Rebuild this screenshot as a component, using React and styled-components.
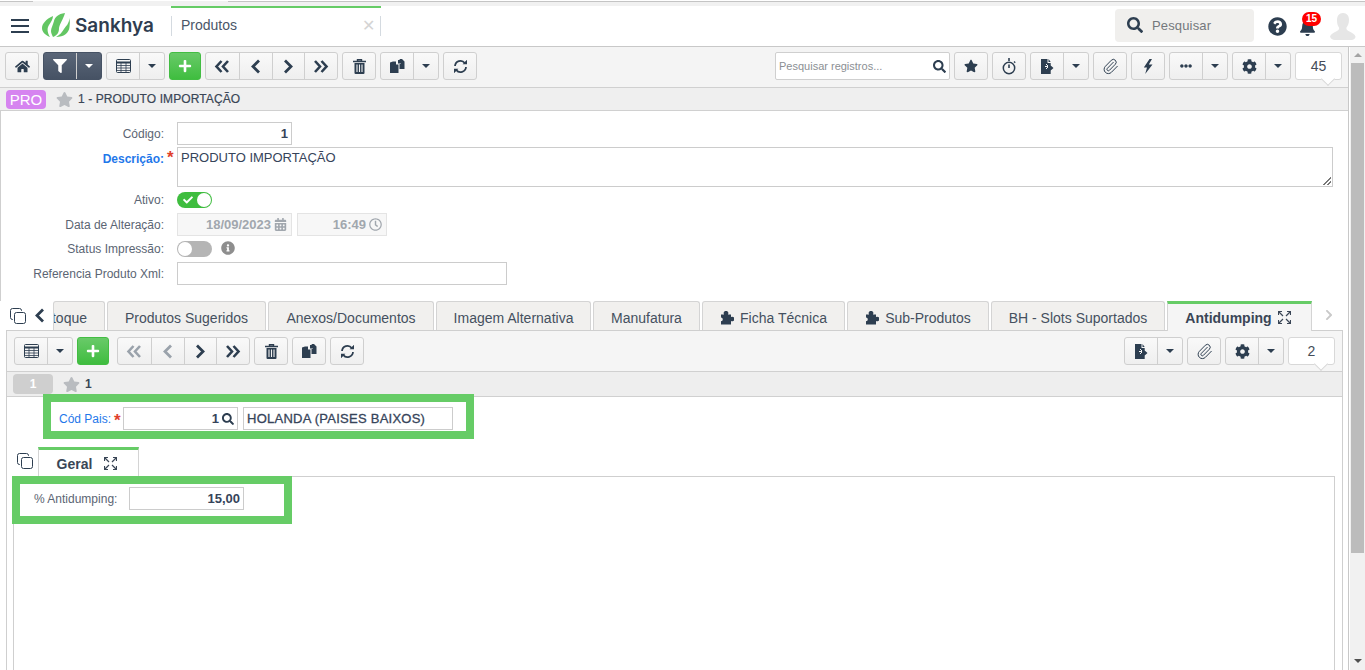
import React from "react";
import styled, { createGlobalStyle } from "styled-components";
import {
  FaHome, FaFilter, FaPlus, FaChevronRight,
  FaStar, FaEllipsisH, FaCog, FaSearch, FaQuestionCircle, FaBell, FaCheck,
  FaInfoCircle, FaCalendarAlt, FaRegClock,
} from "react-icons/fa";
import { Paperclip } from "lucide-react";

const Global = createGlobalStyle`
  html, body { margin: 0; padding: 0; background: #fff; overflow: hidden; }
  body { font-family: "Liberation Sans", Arial, sans-serif; color: #2f3e52; }
  * { box-sizing: border-box; }
`;

const NAVY = "#2d3e50";
const GREEN = "#66cc66";

const Page = styled.div`
  position: relative; width: 1365px; height: 670px; overflow: hidden;
  display: flex; flex-direction: column;
`;
const TopStrip = styled.div`
  height: 6px; flex: none; background: #f1f1f1; border-top: 1px solid #fff; display: flex;
`;
const StripSeg = styled.div`
  width: ${p => p.$w}px; height: 1px; background: ${p => p.$c};
`;
const Header = styled.header`
  height: 41px; flex: none; display: flex; align-items: stretch; background: #fff;
  border-bottom: 1px solid #c8c8c8;
`;
const Burger = styled.button`
  width: 42px; border: 0; background: none; padding: 0 0 0 11px; display: flex; flex-direction: column;
  justify-content: center; gap: 4px;
  span { display: block; width: 18px; height: 2px; background: ${NAVY}; }
`;
const Logo = styled.div`
  width: 129px; display: flex; align-items: center; gap: 5px; padding-bottom: 2px;
  svg { flex: none; }
`;
const LogoText = styled.span`
  font-family: "Inter", sans-serif; font-weight: 600; font-size: 19px; color: #2f3d50;
`;
const OpenTab = styled.div`
  width: 210px; border-top: 2px solid ${GREEN}; display: flex; align-items: center; position: relative;
  padding: 0 10px 4px; justify-content: space-between; font-size: 14px; color: #4a5668;
  &::before, &::after { content: ""; position: absolute; top: 8px; height: 20px; width: 1px; background: #d4dae0; }
  &::before { left: 0; } &::after { right: 0; }
`;
const CloseX = styled.span` color: #d4d4d4; font-size: 16px; margin-right: -4px; `;
const HeadRight = styled.div`
  margin-left: auto; display: flex; align-items: center; padding-right: 9px;
`;
const GlobalSearch = styled.div`
  width: 139px; height: 33px; border-radius: 4px; background: #f0efed; display: flex; align-items: center;
  padding-left: 12px; gap: 9px; font-size: 13px; color: #74787c; letter-spacing: .15px;
  margin-bottom: 2px; margin-right: 14px;
`;
const BellWrap = styled.div`
  position: relative; margin-left: 12px; margin-right: 14px; display: flex; top: 1px;
`;
const Badge = styled.span`
  position: absolute; top: -7px; left: 3px; width: 19px; height: 14px; border-radius: 8px; background: #f00;
  color: #fff; font-size: 10px; font-weight: 700; text-align: center; line-height: 14px;
`;
const Body = styled.div` flex: 1; display: flex; min-height: 0; `;
const Content = styled.main`
  width: 1349px; flex: none; display: flex; flex-direction: column; border-right: 1px solid #c8c8c8; min-height: 0;
`;
const Scrollbar = styled.div`
  margin-left: 1px; width: 15px; background: #f1f1f1; display: flex; flex-direction: column; align-items: center;
  padding-top: 6px;
`;
const ScrollThumb = styled.div` width: 13px; height: 490px; margin-top: 6px; flex: none; background: #bcbcbc; `;
const ArrowUp = styled.span` width: 0; height: 0; border: 4px solid transparent; border-top: 0; border-bottom: 4px solid #a3a3a3; `;
const ArrowDown = styled.span` width: 0; height: 0; border: 4px solid transparent; border-bottom: 0; border-top: 4px solid #505050; margin-top: 106px; `;

const Toolbar = styled.div`
  height: 40px; flex: none; display: flex; align-items: flex-start;
  padding: ${p => p.$pt}px ${p => p.$pr}px 0 ${p => p.$pl}px;
  gap: 4px; background: ${p => p.$bg};
`;
const Spacer = styled.div` flex: 1; `;
const Group = styled.div`
  display: flex; height: 28px; border: 1px solid #cfcfcf; border-radius: 3px; overflow: hidden; flex: none;
  background: linear-gradient(#f9f9f9, #efefef);
  margin-left: ${p => p.$ml || 0}px;
`;
const Btn = styled.button`
  width: ${p => p.$w || 32}px; border: 0; padding: 0; background: none; display: flex; align-items: center; justify-content: center;
  color: ${p => (p.$off ? "#9aa2ab" : NAVY)}; font-size: 14px;
  & + & { border-left: 1px solid #cfcfcf; }
`;
const Caret = styled.span`
  width: 0; height: 0; border: 4px solid transparent; border-bottom: 0; border-top: 4px solid ${p => p.$light ? "#fff" : NAVY};
`;
const DarkGroup = styled(Group)`
  background: linear-gradient(#5a6678, #465264); border-color: #465264;
  button { color: #fff; } button + button { border-left: 1px solid #6a7585; }
`;
const AddBtn = styled.button`
  width: 32px; height: 28px; border: 1px solid #43bd43; border-radius: 3px; padding: 0; color: #fff; font-size: 14px;
  background: linear-gradient(#69ca69, #3fbd3f); display: flex; align-items: center; justify-content: center; flex: none;
`;
const SearchRec = styled.div`
  width: 175px; height: 28px; background: #fff; border: 1px solid #cfcfcf; border-radius: 2px; display: flex; align-items: center;
  justify-content: space-between; padding: 0 3px 0 3px; font-size: 11px; color: #8b8f94;
`;
const Count = styled.div`
  position: relative; width: ${p => p.$w}px; height: 28px; background: #fff; border: 1px solid #d8d8d8; border-radius: 3px; font-size: 14px;
  color: #444c58; display: flex; align-items: center; justify-content: center; flex: none;
  &::after {
    content: ""; position: absolute; right: 8px; bottom: -5px; width: 9px; height: 9px; background: #fff;
    border-right: 1px solid #d8d8d8; border-bottom: 1px solid #d8d8d8; transform: rotate(45deg);
  }
`;
const TitleBar = styled.div`
  height: 24px; flex: none; display: flex; align-items: center; background: #efefef; border-top: 1px solid #d0d0d0;
  border-bottom: 1px solid #d0d0d0; padding-left: 6px; font-size: 12px; font-weight: 400; color: #3a4656;
  -webkit-text-stroke: .2px #3a4656; letter-spacing: .1px;
`;
const Pro = styled.span`
  width: 40px; height: 19px; border-radius: 4px; background: #d684f0; color: #fff; font-size: 15px; text-align: center; line-height: 19px;
  margin-right: 10px; -webkit-text-stroke: 0; letter-spacing: 0;
`;
const TitleStar = styled(FaStar)` margin-right: 5px; color: #b9bcc0; flex: none; `;
const Form = styled.section`
  flex: none; height: 190px; padding-top: 11px; border-left: 1px solid #cfcfcf; display: grid;
  grid-template-columns: 163px 1fr; column-gap: 4px; align-content: start;
`;
const Label = styled.label`
  height: ${p => p.$h}px; font-size: 12px; color: ${p => (p.$req ? "#1f78ea" : "#5b6573")};
  text-align: right; padding-top: ${p => p.$pt ?? 5}px; white-space: nowrap; font-weight: ${p => (p.$req ? 700 : 400)};
  position: relative;
`;
const Star = styled.i`
  position: absolute; left: 100%; margin-left: 3px; top: ${p => p.$t ?? 0}px; font-style: normal; font-weight: 700; color: #e0402c; font-size: 17px;
`;
const Cell = styled.div`
  height: ${p => p.$h}px; padding-left: 9px; display: flex; align-items: flex-start; gap: 5px;
`;
const Field = styled.div`
  width: ${p => p.$w}px; height: ${p => p.$h || 23}px; flex: none; border: 1px solid ${p => p.$off ? "#e4e4e4" : "#cccccc"}; background: ${p => p.$off ? "#f7f7f7" : "#fff"};
  display: flex; align-items: ${p => p.$multi ? "flex-start" : "center"}; justify-content: ${p => p.$left ? "flex-start" : "flex-end"};
  padding: ${p => p.$multi ? "2px 3px" : `0 ${p.$off ? 4 : 3}px`}; font-size: ${p => p.$fs || 12}px; gap: 3px; position: relative;
  color: ${p => p.$off ? "#a1a7ae" : "#36445a"}; font-weight: ${p => p.$bold ? 700 : 400};
`;
const NameField = styled(Field)`
  -webkit-text-stroke: .3px #36445a; letter-spacing: .25px;
`;
const Grip = styled.span`
  position: absolute; right: 1px; bottom: 1px; width: 8px; height: 8px;
  background: linear-gradient(135deg, transparent 50%, #777 50%, #777 58%, transparent 58%, transparent 75%, #777 75%, #777 83%, transparent 83%);
`;
const Toggle = styled.div`
  width: 35px; height: 16px; margin-top: 1px; border-radius: 8px; background: ${p => (p.$on ? "#3fbd3f" : "#b5b5b5")};
  position: relative; color: #fff; font-size: 10px; padding: 3px 0 0 6px; flex: none;
  &::after {
    content: ""; position: absolute; top: 1px; ${p => (p.$on ? "right: 1px" : "left: 1px")}; width: 14px; height: 14px; border-radius: 50%; background: #fff;
  }
`;
const InfoIcon = styled.span` margin: 1px 0 0 4px; color: #8e8e8e; font-size: 14px; display: flex; `;
const TabRow = styled.div`
  height: 30px; flex: none; display: flex; align-items: flex-start; position: relative; z-index: 1; gap: 2px;
  overflow: hidden; border-left: 1px solid transparent;
`;
const TabLead = styled.div`
  width: 52px; height: 29px; flex: none; display: flex; align-items: center; padding-left: 9px; gap: 8px; background: #fff; color: ${NAVY}; z-index: 1; margin-right: -2px;
`;
const Tab = styled.div`
  flex: none; width: ${p => p.$w}px; height: 29px; border: 1px solid #d4d4d4; border-bottom: 0; border-radius: 3px 3px 0 0; background: #f1f0ee;
  display: flex; align-items: center; justify-content: ${p => p.$clip ? "flex-end" : "center"}; gap: 6px; font-size: 14px; color: #45505f; padding-right: ${p => p.$clip ? "17px" : 0}; padding-top: 3px;
  white-space: nowrap; overflow: hidden;
`;
const ActiveTab = styled.div`
  flex: none; width: ${p => p.$w}px; height: 31px; border: 1px solid #d4d4d4; border-top: 3px solid ${GREEN}; border-bottom: 0;
  background: ${p => p.$bg}; position: relative; z-index: 2; display: flex; align-items: center; justify-content: center;
  gap: ${p => p.$gap}px; font-size: 14px; font-weight: 700; color: #3a4656; padding: 0 3px 1px 0;
`;
const TabNext = styled.div` width: 36px; height: 30px; display: flex; align-items: center; justify-content: center; color: #c9c9c9; padding: 0 4px 3px 0; `;
const Inner = styled.section`
  flex: 1; min-height: 0; margin: -1px 5px 0 6px; border: 1px solid #cfcfcf; border-bottom: 0; display: flex; flex-direction: column; background: #fff;
`;
const SubBar = styled.div`
  height: 26px; flex: none; background: #eee; border-top: 1px solid #d0d0d0; border-bottom: 1px solid #d0d0d0; display: flex; align-items: center;
  padding-left: 6px; font-size: 12px; font-weight: 700; color: #3a4656;
`;
const SubBadge = styled.span`
  width: 40px; height: 20px; background: #cfcfcf; color: #fff; border-radius: 4px; font-size: 12px; text-align: center; line-height: 20px; margin-right: 10px;
`;
const KeyRow = styled.div`
  height: 50px; flex: none; display: flex; align-items: flex-start; padding: 10px 0 0 52px; gap: 5px; font-size: 12px;
`;
const KeyLabel = styled.label` color: #1f78ea; margin: 5px 7px 0 0; position: relative; font-size: 12px; `;
const SubTabs = styled.div`
  height: 30px; flex: none; display: flex; padding-left: 10px; gap: 5px; align-items: flex-start;
`;
const CopyWrap = styled.div` width: 16px; padding-top: 6px; color: ${NAVY}; `;
const Panel = styled.div`
  flex: 1; margin: -1px 0 0 6px; width: 1322px; border: 1px solid #cfcfcf; border-bottom: 0; padding: 10px 0 0 20px; display: flex; align-items: flex-start; gap: 12px; font-size: 12px; color: #5b6573;
`;
const PanelLabel = styled.label` padding-top: 5px; width: 83px; white-space: nowrap; `;
const Callout = styled.div`
  position: absolute; border: 8px solid ${GREEN}; left: ${p => p.$x}px; top: ${p => p.$y}px; width: ${p => p.$w}px; height: ${p => p.$h}px; pointer-events: none; z-index: 5;
`;

const Svg = ({ w = 16, h = 16, vb = "0 0 16 16", children, ...r }) => (
  <svg width={w} height={h} viewBox={vb} fill="none" {...r}>{children}</svg>
);
const TableIcon = () => (
  <Svg w={15} h={14} vb="0 0 15 14">
    <rect x=".5" y=".5" width="14" height="13" rx="1" stroke={NAVY} />
    <path d="M0 3.5h15" stroke={NAVY} strokeWidth="2" />
    <path d="M1 6.5h13M1 9h13M1 11.5h13M5 4v9M10 4v9" stroke={NAVY} strokeWidth=".8" />
  </Svg>
);
const TrashIcon = () => (
  <Svg w={13} h={15} vb="0 0 13 15">
    <path d="M4.5 2V.8h4V2M0 2.5h13" stroke={NAVY} strokeWidth="1.4" />
    <path d="M1.5 4h10v10a1 1 0 0 1-1 1h-8a1 1 0 0 1-1-1z" fill={NAVY} />
    <path d="M4 5.5V13M6.5 5.5V13M9 5.5V13" stroke="#f5f5f5" strokeWidth="1.1" />
  </Svg>
);
const CopyIcon = () => (
  <Svg w={15} h={14} vb="0 0 15 14">
    <path d="M8 1h3v3.5H8z" fill={NAVY} />
    <path d="M9.5 0H12l2.5 2.5V10H9.5V5H11z" fill={NAVY} />
    <path d="M0 3.5 3 2.5h3v3h2.5V14H0z" fill={NAVY} />
  </Svg>
);
const RefreshIcon = () => (
  <Svg w={15} h={15} vb="0 0 15 15">
    <path d="M2 7a5.5 5.5 0 0 1 9.8-3M13 8a5.5 5.5 0 0 1-9.8 3" stroke={NAVY} strokeWidth="1.8" />
    <path d="M14 .8v4.4H9.6zM1 14.2V9.8h4.4z" fill={NAVY} />
  </Svg>
);
const TimerIcon = () => (
  <Svg w={14} h={17} vb="0 0 14 17">
    <circle cx="7" cy="10" r="5.7" stroke={NAVY} strokeWidth="1.5" />
    <path d="M7 0v3M7 6.5V10" stroke={NAVY} strokeWidth="1.6" />
    <path d="M12 3.5l1.2 1.2" stroke={NAVY} strokeWidth="1.3" />
  </Svg>
);
const ExportIcon = () => (
  <Svg w={13} h={15} vb="0 0 13 15">
    <path d="M0 0h6.5v4h3.2v2.5L12.500 9 9.700 11.500V15H0z" fill={NAVY} />
    <path d="M7.500 0l2.200 3H7.500z" fill={NAVY} />
    <path d="M5 5l2 2M5 10l2-2M4 7.500h3" stroke="#f5f5f5" strokeWidth="1" />
  </Svg>
);
const ExpandIcon = () => (
  <Svg w={13} h={13} vb="0 0 13 13">
    <path d="M.5 4V.5H4M9 .5h3.500V4M12.500 9v3.500H9M4 12.500H.5V9" stroke="#3a4656" strokeWidth="1.200" />
    <path d="M1 1l4 4M12 1L8 5M12 12L8 8M1 12l4-4" stroke="#3a4656" strokeWidth="1.200" />
  </Svg>
);
const CopiesIcon = () => (
  <Svg w={16} h={16} vb="0 0 16 16">
    <rect x="4.500" y="4.500" width="11" height="11" rx="2" stroke={NAVY} />
    <path d="M3 11.500H2.500a2 2 0 0 1-2-2v-7a2 2 0 0 1 2-2h7a2 2 0 0 1 2 2V3" stroke={NAVY} />
  </Svg>
);
const ChevL = ({ c = NAVY }) => (
  <Svg w={11} h={15} vb="0 0 11 15"><path d="M9 1.500 3 7.500l6 6" stroke={c} strokeWidth="2.800" /></Svg>
);
const ChevR = ({ c = NAVY }) => (
  <Svg w={11} h={15} vb="0 0 11 15"><path d="M2 1.500l6 6-6 6" stroke={c} strokeWidth="2.800" /></Svg>
);
const ChevLL = ({ c = NAVY }) => (
  <Svg w={16} h={13} vb="0 0 16 13"><path d="M7.500 1 2.500 6.500l5 5.500M14 1 9 6.500l5 5.500" stroke={c} strokeWidth="2.600" /></Svg>
);
const ChevRR = ({ c = NAVY }) => (
  <Svg w={16} h={13} vb="0 0 16 13"><path d="M2 1l5 5.500L2 12M8.500 1l5 5.500-5 5.500" stroke={c} strokeWidth="2.600" /></Svg>
);
const Bolt = () => (
  <Svg w={10} h={15} vb="0 0 10 15"><path d="M6.500 0 .8 8.500h3.200L2.200 15 9.500 5.500H5.800L9 0z" fill={NAVY} /></Svg>
);
const Puzzle = () => (
  <Svg w={14} h={14} vb="0 0 14 14">
    <path d="M1 3.500H4.200a2.300 2.300 0 1 1 3.600 0H11V6a2.300 2.300 0 1 1 0 4v3.500H1V10.200a1.800 1.800 0 0 0 0-3.600z" fill={NAVY} />
  </Svg>
);
const Avatar = () => (
  <Svg w={26} h={27} vb="0 0 26 27">
    <path d="M13 0c4 0 6 3.200 6 7 0 3-1 5.500-2.500 7.500-.4 1.500.2 2.700 2 3.500 3.500 1.500 6 3 7 5.500 0 2-2 3.500-4 3.500H5c-2.500 0-4.500-1.500-5-3.500 1-2.500 3.500-4 7-5.500 1.800-.8 2.400-2 2-3.500C7.500 12.500 7 10 7 7c0-3.800 2-7 6-7z" fill="#e6e6e6" />
  </Svg>
);
const LogoMark = () => (
  <Svg w={28} h={24} vb="0 0 28 24">
    <path d="M11 3C4 6 0 11 0 15c0 4 3 7 8 9-3-5-3-9-1-12 2-3 4-6 4-9z" fill="#63c663" />
    <path d="M23 0c-7 1-10 4-11 8-1 4-3 7-3 10 0 2 1 4 2 6 5-2 6-5 6-9 1-5 4-8 6-15z" fill="#63c663" />
    <path d="M27.500 5c-.5 6-3.500 8-5.500 11-2 3-4 6-8 8 8 0 13-4 13.500-10 .5-3 .5-6 0-9z" fill="#63c663" />
  </Svg>
);

const Dropdown = ({ icon, w = 32, cw = 25 }) => (
  <Group><Btn $w={w}>{icon}</Btn><Btn $w={cw}><Caret /></Btn></Group>
);
const Single = ({ icon, w = 32 }) => <Group><Btn $w={w}>{icon}</Btn></Group>;
const Clip = () => <Paperclip size={17} strokeWidth={1.4} color={NAVY} />;

const tabs = [
  ["Produtos Sugeridos", 159], ["Anexos/Documentos", 166], ["Imagem Alternativa", 155], ["Manufatura", 107],
];

export default function App() {
  return (
    <Page>
      <Global />
      <TopStrip>
        <StripSeg $w={33} $c="#c4c4c4" /><StripSeg $w={195} $c="transparent" /><StripSeg $w={1137} $c="#c4c4c4" />
      </TopStrip>
      <Header>
        <Burger aria-label="menu"><span /><span /><span /></Burger>
        <Logo><LogoMark /><LogoText>Sankhya</LogoText></Logo>
        <OpenTab>Produtos<CloseX>✕</CloseX></OpenTab>
        <HeadRight>
          <GlobalSearch><FaSearch size={16} color={NAVY} />Pesquisar</GlobalSearch>
          <FaQuestionCircle size={19} color={NAVY} />
          <BellWrap><FaBell size={17} color={NAVY} /><Badge>15</Badge></BellWrap>
          <Avatar />
        </HeadRight>
      </Header>
      <Body>
        <Content>
          <Toolbar $pt={5} $pl={5} $pr={6} $bg="#f4f4f4">
            <Single icon={<FaHome size={15} />} />
            <DarkGroup><Btn><FaFilter size={14} /></Btn><Btn $w={25}><Caret $light /></Btn></DarkGroup>
            <Dropdown icon={<TableIcon />} />
            <AddBtn><FaPlus size={14} /></AddBtn>
            <Group>
              <Btn $w={32.75}><ChevLL /></Btn><Btn $w={32.75}><ChevL /></Btn>
              <Btn $w={32.75}><ChevR /></Btn><Btn $w={32.75}><ChevRR /></Btn>
            </Group>
            <Single icon={<TrashIcon />} />
            <Dropdown icon={<CopyIcon />} />
            <Single icon={<RefreshIcon />} />
            <Spacer />
            <SearchRec>Pesquisar registros...<FaSearch size={13} color={NAVY} /></SearchRec>
            <Single icon={<FaStar size={14} />} />
            <Single icon={<TimerIcon />} />
            <Dropdown icon={<ExportIcon />} />
            <Single icon={<Clip />} />
            <Single icon={<Bolt />} />
            <Dropdown icon={<FaEllipsisH size={12} />} />
            <Dropdown icon={<FaCog size={15} />} />
            <Count $w={47}>45</Count>
          </Toolbar>
          <TitleBar>
            <Pro>PRO</Pro><TitleStar size={17} />1 - PRODUTO IMPORTAÇÃO
          </TitleBar>
          <Form>
            <Label $h={25}>Código:</Label>
            <Cell $h={25}><Field $w={115} $fs={13} $bold>1</Field></Cell>
            <Label $h={44} $req $pt={5}>Descrição:<Star $t={1}>*</Star></Label>
            <Cell $h={44}><Field $w={1156} $h={40} $multi $left $fs={13}>PRODUTO IMPORTAÇÃO<Grip /></Field></Cell>
            <Label $h={22} $pt={2}>Ativo:</Label>
            <Cell $h={22}><Toggle $on><FaCheck /></Toggle></Cell>
            <Label $h={27} $pt={5}>Data de Alteração:</Label>
            <Cell $h={27}>
              <Field $w={115} $off $bold $fs={13}>18/09/2023<FaCalendarAlt size={13} /></Field>
              <Field $w={90} $off $bold $fs={13}>16:49<FaRegClock size={13} /></Field>
            </Cell>
            <Label $h={22} $pt={2}>Status Impressão:</Label>
            <Cell $h={22}><Toggle /><InfoIcon><FaInfoCircle /></InfoIcon></Cell>
            <Label $h={25}>Referencia Produto Xml:</Label>
            <Cell $h={25}><Field $w={330} /></Cell>
          </Form>
          <TabRow>
            <TabLead><CopiesIcon /><ChevL /></TabLead>
            <Tab $w={52} $clip>toque</Tab>
            {tabs.map(([t, w]) => <Tab key={t} $w={w}>{t}</Tab>)}
            <Tab $w={143}><Puzzle />Ficha Técnica</Tab>
            <Tab $w={142}><Puzzle />Sub-Produtos</Tab>
            <Tab $w={174}>BH - Slots Suportados</Tab>
            <ActiveTab $w={145} $gap={6} $bg="#f5f5f5">Antidumping<ExpandIcon /></ActiveTab>
            <TabNext><FaChevronRight size={12} /></TabNext>
          </TabRow>
          <Inner>
            <Toolbar $pt={6} $pl={7} $pr={7} $bg="#f5f5f5">
              <Dropdown icon={<TableIcon />} />
              <AddBtn><FaPlus size={14} /></AddBtn>
              <Group $ml={4}>
                <Btn $w={32.75} $off><ChevLL c="#9aa2ab" /></Btn><Btn $w={32.75} $off><ChevL c="#9aa2ab" /></Btn>
                <Btn $w={32.75}><ChevR /></Btn><Btn $w={32.75}><ChevRR /></Btn>
              </Group>
              <Single icon={<TrashIcon />} />
              <Single icon={<CopyIcon />} />
              <Single icon={<RefreshIcon />} />
              <Spacer />
              <Dropdown icon={<ExportIcon />} />
              <Single icon={<Clip />} />
              <Dropdown icon={<FaCog size={15} />} />
              <Count $w={47}>2</Count>
            </Toolbar>
            <SubBar><SubBadge>1</SubBadge><TitleStar size={17} />1</SubBar>
            <KeyRow>
              <KeyLabel>Cód Pais:<Star $t={-1}>*</Star></KeyLabel>
              <Field $w={115} $fs={13} $bold>1<FaSearch size={12} color={NAVY} /></Field>
              <NameField $w={210} $left $fs={13}>HOLANDA (PAISES BAIXOS)</NameField>
            </KeyRow>
            <SubTabs>
              <CopyWrap><CopiesIcon /></CopyWrap>
              <ActiveTab $w={101} $gap={12} $bg="#fff">Geral<ExpandIcon /></ActiveTab>
            </SubTabs>
            <Panel>
              <PanelLabel>% Antidumping:</PanelLabel>
              <Field $w={115} $fs={13} $bold>15,00</Field>
            </Panel>
          </Inner>
        </Content>
        <Scrollbar><ArrowUp /><ScrollThumb /><ArrowDown /></Scrollbar>
      </Body>
      <Callout $x={43} $y={394} $w={431} $h={45} />
      <Callout $x={12} $y={476} $w={280} $h={48} />
    </Page>
  );
}
